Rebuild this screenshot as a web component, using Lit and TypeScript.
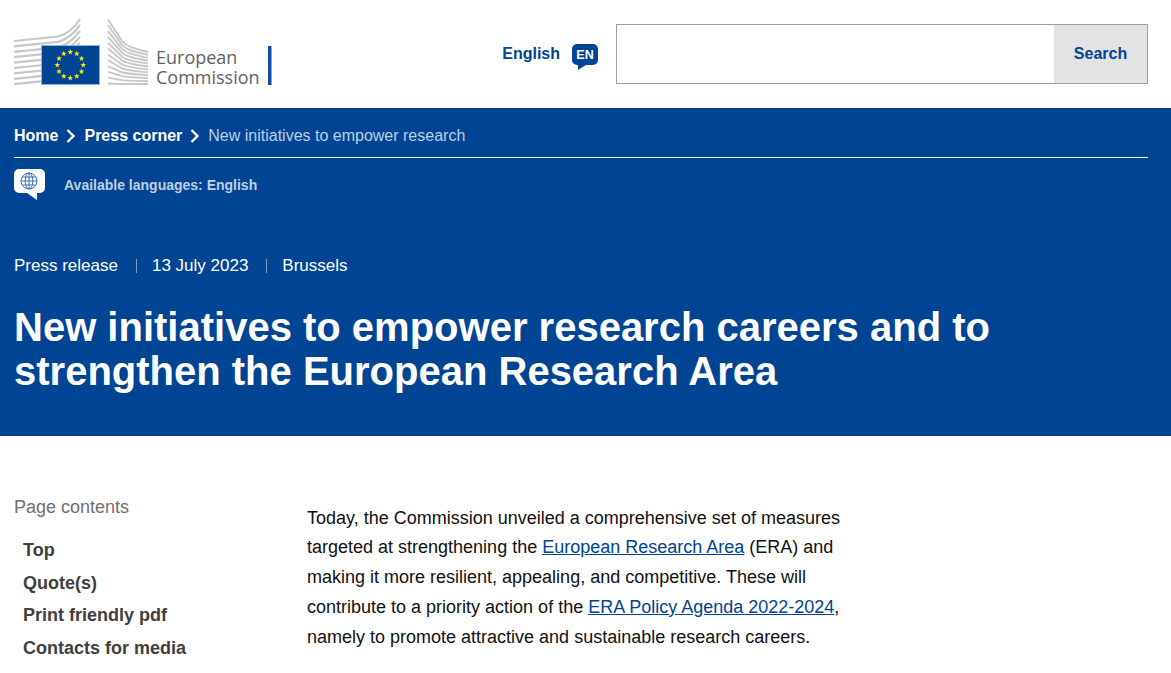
import { LitElement, html, css, svg } from 'lit';
import { customElement } from 'lit/decorators.js';

const STAR_COUNT = 12;

function euStars() {
  const stars = [];
  for (let i = 0; i < STAR_COUNT; i++) {
    const a = (i / STAR_COUNT) * Math.PI * 2;
    const cx = 70.3 + Math.sin(a) * 13;
    const cy = 65 - Math.cos(a) * 13;
    const pts = [];
    for (let k = 0; k < 10; k++) {
      const r = k % 2 ? 1.2 : 3;
      const b = (k / 10) * Math.PI * 2;
      pts.push(`${(cx + Math.sin(b) * r).toFixed(2)},${(cy - Math.cos(b) * r).toFixed(2)}`);
    }
    stars.push(svg`<polygon points=${pts.join(' ')} fill="#ffed00" />`);
  }
  return stars;
}

// the two wings of the Berlaymont building, behind the flag
function buildingLines() {
  const lines = [];
  for (let i = 0; i < 9; i++) {
    const d = i * 5.4;
    lines.push(
      svg`<path d="M14 ${41 + d} L58 ${36.5 + d} C68 ${34 + d} 75 ${27 + d} 80 ${19 + d * 1.1}" fill="none" stroke="#c6c7c9" stroke-width="2.2" />`
    );
  }
  for (let i = 0; i < 12; i++) {
    const t = i / 11;
    lines.push(
      svg`<path d="M108 ${19.5 + t * 64} L122 ${41 + t * 43} C126 ${46 + t * 38} 132 ${48 + t * 36} 148 ${52 + t * 32}" fill="none" stroke="#c6c7c9" stroke-width="1.9" />`
    );
  }
  return lines;
}

@customElement('app-root')
export class AppRoot extends LitElement {
  static styles = css`
    :host {
      display: block;
      height: 673px;
      overflow: hidden;
      background: #fff;
      font-family: 'Liberation Sans', Arial, sans-serif;
      color: #111;
    }

    a {
      color: inherit;
      text-decoration: none;
    }

    .top {
      height: 108px;
      display: flex;
      align-items: center;
      padding: 0 23px 0 14px;
      box-sizing: border-box;
    }

    .logo {
      display: block;
      flex-shrink: 0;
    }

    .logo-text {
      font-family: 'Open Sans', sans-serif;
      font-size: 18px;
      font-weight: 500;
      fill: #5f6266;
    }

    .lang {
      margin-left: auto;
      display: flex;
      align-items: center;
      gap: 12px;
      color: #004494;
      font-size: 16px;
      font-weight: 700;
      margin-right: 18px;
    }

    .lang svg {
      display: block;
      margin-top: 6px;
    }

    .search {
      width: 532px;
      height: 60px;
      box-sizing: border-box;
      border: 1px solid #9f9f9f;
      display: flex;
      justify-content: flex-end;
    }

    .search-btn {
      width: 93px;
      background: #e3e3e3;
      color: #004494;
      font-size: 16px;
      font-weight: 700;
      display: flex;
      align-items: center;
      justify-content: center;
    }

    .band {
      height: 328px;
      box-sizing: border-box;
      background: #004494;
      color: #fff;
      padding: 0 23px 0 14px;
    }

    .crumbs {
      height: 50px;
      box-sizing: border-box;
      border-bottom: 1px solid #fff;
      display: flex;
      align-items: center;
      font-size: 16px;
      padding-top: 7px;
    }

    .crumbs a {
      font-weight: 700;
    }

    .crumbs svg {
      margin: 0 8px;
      display: block;
    }

    .crumbs .current {
      color: #bfd0e4;
    }

    .avail {
      display: flex;
      align-items: center;
      gap: 19px;
      margin-top: 11px;
      font-size: 14px;
      font-weight: 700;
      color: #bfd0e4;
    }

    .avail svg {
      display: block;
    }

    .meta {
      display: flex;
      align-items: center;
      font-size: 17px;
      margin-top: 54px;
      line-height: 24px;
    }

    .meta .sep {
      width: 1px;
      height: 14px;
      background: #7fa1c9;
      margin: 0 15px 0 18px;
    }

    h1 {
      margin: 27px 0 0;
      font-size: 40px;
      line-height: 44px;
      font-weight: 700;
      width: 1100px;
    }

    .main {
      display: flex;
      padding: 59px 0 0 14px;
    }

    .toc {
      width: 293px;
      flex-shrink: 0;
    }

    .toc-title {
      font-size: 18px;
      color: #707070;
      line-height: 24px;
    }

    .toc ul {
      list-style: none;
      margin: 15px 0 0;
      padding: 0 0 0 9px;
    }

    .toc li {
      font-size: 18px;
      font-weight: 700;
      color: #404040;
      line-height: 32.6px;
    }

    .body {
      width: 545px;
      font-size: 18px;
      line-height: 29.75px;
      margin: 0;
      padding-top: 8.5px;
    }

    .body a {
      color: #004494;
      text-decoration: underline;
    }
  `;

  render() {
    return html`
      <div class="top">
        <svg class="logo" width="262" height="72" viewBox="14 18 262 72">
          ${buildingLines()}
          <rect x="41.5" y="45.5" width="58" height="39" fill="#004494" stroke="#8fb0d8" />
          ${euStars()}
          <text class="logo-text" x="156" y="64">European</text>
          <text class="logo-text" x="156" y="84">Commission</text>
          <rect x="268" y="46" width="3.5" height="39" fill="#0f4ea3" />
        </svg>
        <div class="lang">
          <span>English</span>
          <svg width="26" height="26" viewBox="0 0 26 26">
            <path d="M5 0h16a5 5 0 0 1 5 5v11a5 5 0 0 1-5 5h-7l-8 5v-5H5a5 5 0 0 1-5-5V5a5 5 0 0 1 5-5z" fill="#004494" />
            <text x="13" y="15" text-anchor="middle" font-size="12.5" font-weight="700" fill="#fff" font-family="Liberation Sans">EN</text>
          </svg>
        </div>
        <div class="search"><div class="search-btn">Search</div></div>
      </div>

      <div class="band">
        <nav class="crumbs">
          <a href="#">Home</a>
          <svg width="10" height="14" viewBox="0 0 10 14"><path d="M1.5 1 7.5 7 1.5 13" fill="none" stroke="#fff" stroke-width="2.3" /></svg>
          <a href="#">Press corner</a>
          <svg width="10" height="14" viewBox="0 0 10 14"><path d="M1.5 1 7.5 7 1.5 13" fill="none" stroke="#fff" stroke-width="2.3" /></svg>
          <span class="current">New initiatives to empower research</span>
        </nav>
        <div class="avail">
          <svg width="31" height="31" viewBox="0 0 31 31">
            <path d="M5 0h21a5 5 0 0 1 5 5v14a5 5 0 0 1-5 5h-3v7l-10-7H5a5 5 0 0 1-5-5V5a5 5 0 0 1 5-5z" fill="#fff" />
            <g fill="none" stroke="#3a6fb0" stroke-width="1">
              <circle cx="15" cy="12" r="8" />
              <ellipse cx="15" cy="12" rx="3.8" ry="8" />
              <path d="M7 12h16M8.5 8h13M8.5 16h13M15 4v16" />
            </g>
          </svg>
          <span>Available languages: English</span>
        </div>
        <div class="meta">
          <span>Press release</span><span class="sep"></span>
          <span>13 July 2023</span><span class="sep"></span>
          <span>Brussels</span>
        </div>
        <h1>New initiatives to empower research careers and to strengthen the European Research Area</h1>
      </div>

      <div class="main">
        <aside class="toc">
          <div class="toc-title">Page contents</div>
          <ul>
            <li>Top</li>
            <li>Quote(s)</li>
            <li>Print friendly pdf</li>
            <li>Contacts for media</li>
          </ul>
        </aside>
        <p class="body">
          Today, the Commission unveiled a comprehensive set of measures
          targeted at strengthening the <a href="#">European Research Area</a> (ERA) and
          making it more resilient, appealing, and competitive. These will
          contribute to a priority action of the <a href="#">ERA Policy Agenda 2022-2024</a>,
          namely to promote attractive and sustainable research careers.
        </p>
      </div>
    `;
  }
}
